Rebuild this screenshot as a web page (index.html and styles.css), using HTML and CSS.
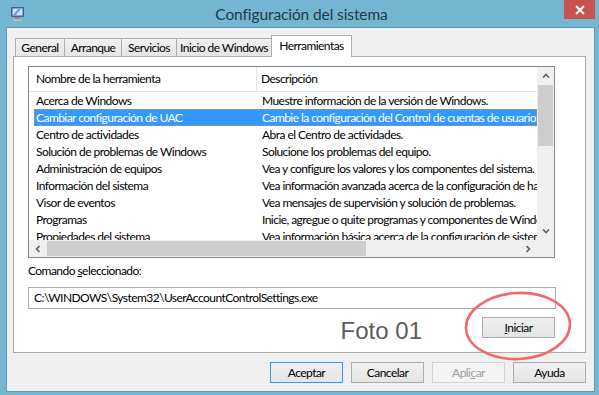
FILE: index.html
```html
<!DOCTYPE html>
<html lang="es">
<head>
    <meta charset="UTF-8">
    <meta name="viewport" content="width=device-width, initial-scale=1.0">
    <title>Configuración del sistema</title>
    <link rel="stylesheet" href="styles.css">
</head>
<body>
    <div class="window">
        <!-- Title bar -->
        <div class="titlebar">
            <svg class="app-icon" width="15" height="16" viewBox="0 0 15 16">
                <rect x="1" y="1" width="13" height="10" rx="1" fill="#3d5f96"/>
                <rect x="2.5" y="2.5" width="10" height="7" fill="#cfe6fb"/>
                <path d="M3 9 L8 3 L11 3 L6 9 Z" fill="#5aa0e8"/>
                <rect x="5" y="11" width="5" height="2" fill="#8a8f96"/>
                <rect x="3" y="13" width="9" height="2" rx="1" fill="#b8bcc2"/>
            </svg>
            <div class="title">Configuración del sistema</div>
            <div class="close-btn">
                <svg width="10" height="10" viewBox="0 0 10 10">
                    <path d="M1 1 L9 9 M9 1 L1 9" stroke="#fff" stroke-width="2"/>
                </svg>
            </div>
        </div>

        <div class="client">
            <!-- Tabs -->
            <div class="tabs">
                <div class="tab tab-general">General</div>
                <div class="tab tab-boot">Arranque</div>
                <div class="tab tab-services">Servicios</div>
                <div class="tab tab-startup">Inicio de Windows</div>
                <div class="tab active">Herramientas</div>
            </div>

            <div class="panel">
                <!-- Tools list -->
                <div class="listview">
                    <div class="list-body">
                        <div class="list-header">
                            <div class="col1">Nombre de la herramienta</div>
                            <div class="col2">Descripción</div>
                        </div>
                        <div class="row"><div class="col1">Acerca de Windows</div><div class="col2">Muestre información de la versión de Windows.</div></div>
                        <div class="row selected"><div class="col1">Cambiar configuración de UAC</div><div class="col2">Cambie la configuración del Control de cuentas de usuario.</div></div>
                        <div class="row"><div class="col1">Centro de actividades</div><div class="col2">Abra el Centro de actividades.</div></div>
                        <div class="row"><div class="col1">Solución de problemas de Windows</div><div class="col2">Solucione los problemas del equipo.</div></div>
                        <div class="row"><div class="col1">Administración de equipos</div><div class="col2">Vea y configure los valores y los componentes del sistema.</div></div>
                        <div class="row"><div class="col1">Información del sistema</div><div class="col2">Vea información avanzada acerca de la configuración de hardware.</div></div>
                        <div class="row"><div class="col1">Visor de eventos</div><div class="col2">Vea mensajes de supervisión y solución de problemas.</div></div>
                        <div class="row"><div class="col1">Programas</div><div class="col2">Inicie, agregue o quite programas y componentes de Windows.</div></div>
                        <div class="row"><div class="col1">Propiedades del sistema</div><div class="col2">Vea información básica acerca de la configuración de sistema.</div></div>
                    </div>
                    <div class="vscroll">
                        <div class="arrow">
                            <svg width="8" height="5" viewBox="0 0 8 5"><path d="M1 4.5 L4 1.5 L7 4.5" fill="none" stroke="#606060" stroke-width="1.6"/></svg>
                        </div>
                        <div class="vthumb"></div>
                        <div class="spacer"></div>
                        <div class="arrow">
                            <svg width="8" height="5" viewBox="0 0 8 5"><path d="M1 0.5 L4 3.5 L7 0.5" fill="none" stroke="#606060" stroke-width="1.6"/></svg>
                        </div>
                    </div>
                    <div class="hscroll">
                        <div class="arrow">
                            <svg width="5" height="8" viewBox="0 0 5 8"><path d="M4.5 1 L1.5 4 L4.5 7" fill="none" stroke="#606060" stroke-width="1.6"/></svg>
                        </div>
                        <div class="hthumb"></div>
                        <div class="spacer"></div>
                        <div class="arrow">
                            <svg width="5" height="8" viewBox="0 0 5 8"><path d="M0.5 1 L3.5 4 L0.5 7" fill="none" stroke="#606060" stroke-width="1.6"/></svg>
                        </div>
                    </div>
                    <div class="corner"></div>
                </div>

                <div class="field-label">Comando <u>s</u>eleccionado:</div>
                <div class="command">C:\WINDOWS\System32\UserAccountControlSettings.exe</div>

                <div class="launch-row">
                    <span class="watermark">Foto 01</span>
                    <button class="btn"><u>I</u>niciar</button>
                </div>
            </div>

            <!-- Dialog buttons -->
            <div class="dialog-buttons">
                <button class="btn default">Aceptar</button>
                <button class="btn">Cancelar</button>
                <button class="btn" disabled>Apli<u>c</u>ar</button>
                <button class="btn">Ayuda</button>
            </div>
        </div>

        <!-- Hand drawn mark over the Iniciar button -->
        <svg class="mark" width="112" height="74" viewBox="0 0 112 74">
            <ellipse cx="56" cy="37" rx="52" ry="33" fill="none" stroke="#ef6b6b" stroke-width="2.6" transform="rotate(-3 56 37)"/>
        </svg>
    </div>
</body>
</html>
```

FILE: styles.css
```css
body {
    margin: 0;
    padding: 0;
    background-color: #74b6d1;
    font-family: Lato, "Noto Sans", sans-serif;
    font-size: 12px;
    letter-spacing: -0.55px;
    color: #000;
}
.window {
    position: relative;
    width: 599px;
    height: 395px;
    overflow: hidden;
}
.titlebar {
    display: flex;
    align-items: flex-start;
    height: 27px;
}
.app-icon {
    margin: 6px 0 0 10px;
}
.title {
    flex: 1;
    text-align: center;
    font-size: 15.5px;
    letter-spacing: -0.1px;
    line-height: 28px;
    color: #23394a;
    padding-left: 14px;
}
.close-btn {
    width: 31px;
    height: 19px;
    margin-right: 4px;
    background: #c75050;
    display: flex;
    align-items: center;
    justify-content: center;
}
.client {
    margin-left: 6px;
    width: 587px;
    height: 363px;
    border: 1px solid #5f9bb7;
    background: #f0f0f0;
}
.tabs {
    display: flex;
    align-items: flex-end;
    height: 21px;
    margin-top: 7px;
    padding-left: 8px;
    position: relative;
    z-index: 1;
}
.tab {
    height: 18px;
    line-height: 18px;
    text-align: center;
    border: 1px solid #acacac;
    border-bottom: none;
    border-right: none;
    background: linear-gradient(#f0f0f0, #e5e5e5);
    box-sizing: border-box;
    white-space: nowrap;
}
.tab-general { width: 49px; }
.tab-boot { width: 57px; }
.tab-services { width: 55px; }
.tab-startup {
    width: 96px;
    border-right: 1px solid #acacac;
}
.tab.active {
    width: 81px;
    height: 22px;
    line-height: 19px;
    margin-bottom: -1px;
    margin-left: -1px;
    background: #fff;
    border-right: 1px solid #acacac;
    border-left: 1px solid #acacac;
}
.panel {
    margin-left: 6px;
    width: 573px;
    height: 297px;
    border: 1px solid #acacac;
    background: #fff;
    box-sizing: border-box;
    padding: 9px 0 0 14px;
}
.listview {
    width: 527px;
    height: 192px;
    border: 1px solid #828790;
    box-sizing: border-box;
    display: grid;
    grid-template-columns: 1fr 17px;
    grid-template-rows: 1fr 17px;
}
.list-body {
    overflow: hidden;
}
.list-header {
    display: flex;
    height: 24px;
    line-height: 24px;
    border-bottom: 1px solid #dde8f2;
}
.list-header .col1 {
    width: 228px;
    padding-left: 7px;
    box-sizing: border-box;
    border-right: 1px solid #e5e5e5;
}
.list-header .col2 {
    padding-left: 4px;
}
.row {
    display: flex;
    height: 17px;
    line-height: 17px;
    margin-left: 5px;
    width: 503px;
    white-space: nowrap;
}
.row .col1 {
    width: 223px;
    padding-left: 2px;
    box-sizing: border-box;
    overflow: hidden;
}
.row .col2 {
    width: 280px;
    padding-left: 5px;
    box-sizing: border-box;
    overflow: hidden;
}
.row.selected {
    background: #3399ff;
    color: #fff;
    outline: 1px dotted #c58c4a;
    outline-offset: -1px;
}
.vscroll, .hscroll {
    display: flex;
    background: #f0f0f0;
}
.vscroll {
    flex-direction: column;
}
.arrow {
    flex: 0 0 17px;
    display: flex;
    align-items: center;
    justify-content: center;
}
.spacer {
    flex: 1;
}
.vthumb {
    height: 61px;
    margin: 1px 1px 0 1px;
    background: #cdcdcd;
}
.hthumb {
    width: 319px;
    margin: 1px 0 1px 1px;
    background: #cdcdcd;
}
.corner {
    background: #f0f0f0;
}
.field-label {
    margin-top: 5px;
    line-height: 15px;
}
.command {
    margin-top: 9px;
    width: 528px;
    height: 22px;
    line-height: 20px;
    border: 1px solid #abadb3;
    box-sizing: border-box;
    padding-left: 5px;
}
.launch-row {
    display: flex;
    justify-content: flex-end;
    align-items: flex-start;
    width: 527px;
    margin-top: 8px;
    gap: 60px;
}
.watermark {
    font-family: "Liberation Sans", Arial, sans-serif;
    font-size: 24px;
    letter-spacing: 0;
    line-height: 24px;
    margin-top: 2px;
    color: #5c5c5c;
}
.btn {
    width: 73px;
    height: 21px;
    padding: 0;
    font-family: inherit;
    font-size: 12px;
    letter-spacing: -0.55px;
    color: #000;
    border: 1px solid #acacac;
    background: linear-gradient(#f0f0f0, #e5e5e5);
    border-radius: 0;
}
.btn.default {
    border-color: #3399ff;
}
.btn:disabled {
    color: #a0a0a0;
    border-color: #d5d5d5;
    background: #f4f4f4;
}
.dialog-buttons {
    display: flex;
    justify-content: flex-end;
    gap: 8px;
    margin: 9px 8px 0 0;
}
.mark {
    position: absolute;
    left: 462px;
    top: 289px;
}
```
